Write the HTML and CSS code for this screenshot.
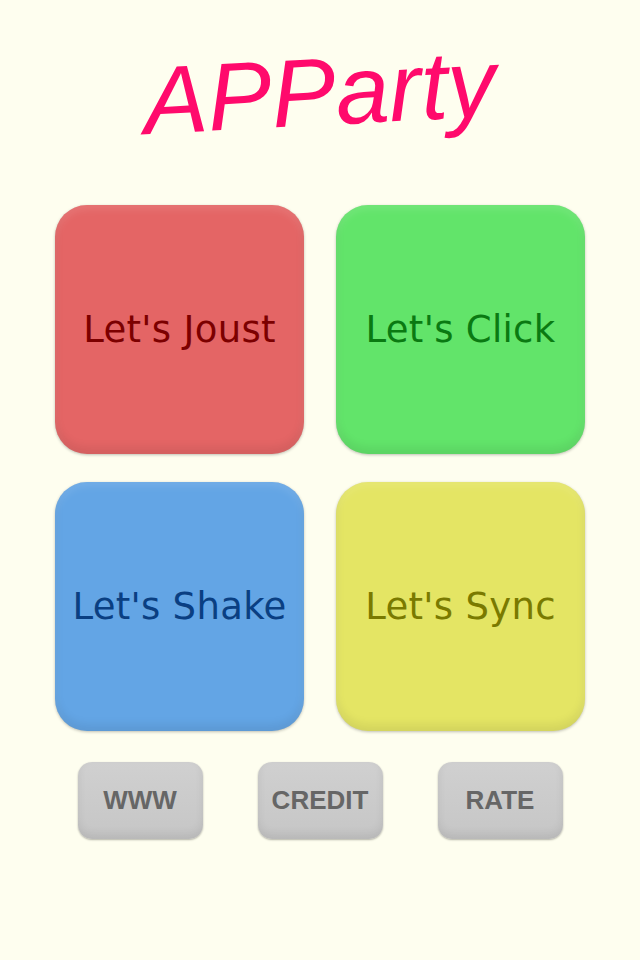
FILE: index.html
```html
<!DOCTYPE html>
<html lang="en">
<head>
    <meta charset="UTF-8">
    <meta name="viewport" content="width=device-width, initial-scale=1.0">
    <title>APParty</title>
    <link rel="stylesheet" href="styles.css">
</head>
<body>
    <h1 class="logo">APParty</h1>

    <!-- Game tiles -->
    <div class="games">
        <a class="tile joust" href="#">Let's Joust</a>
        <a class="tile click" href="#">Let's Click</a>
        <a class="tile shake" href="#">Let's Shake</a>
        <a class="tile sync" href="#">Let's Sync</a>
    </div>

    <!-- Bottom buttons -->
    <div class="links">
        <a class="small-btn" href="#">WWW</a>
        <a class="small-btn" href="#">CREDIT</a>
        <a class="small-btn" href="#">RATE</a>
    </div>
</body>
</html>
```

FILE: styles.css
```css
body {
    margin: 0;
    height: 960px;
    background-color: #fefeef;
    font-family: "Liberation Sans", Arial, sans-serif;
}
.logo {
    margin: 0;
    padding-top: 42px;
    height: 205px;
    box-sizing: border-box;
    text-align: center;
    font-size: 96px;
    font-weight: normal;
    font-style: italic;
    color: #ff0a6c;
    line-height: 100px;
    transform: rotate(-3deg);
}
.games {
    display: grid;
    grid-template-columns: 249px 249px;
    column-gap: 32px;
    row-gap: 28px;
    justify-content: center;
}
.tile {
    height: 249px;
    border-radius: 32px;
    display: flex;
    align-items: center;
    justify-content: center;
    font-family: "DejaVu Sans", sans-serif;
    font-size: 37px;
    letter-spacing: 0.3px;
    text-decoration: none;
    box-shadow: 0 1px 3px rgba(0, 0, 0, 0.25), inset 0 -6px 10px rgba(0, 0, 0, 0.08), inset 0 4px 8px rgba(255, 255, 255, 0.12);
}
.joust {
    background-color: #e46565;
    color: #7c0000;
}
.click {
    background-color: #62e46a;
    color: #0a7a12;
}
.shake {
    background-color: #63a5e5;
    color: #0a3f82;
}
.sync {
    background-color: #e4e564;
    color: #7a7a00;
}
.links {
    display: flex;
    justify-content: center;
    gap: 55px;
    margin-top: 31px;
}
.small-btn {
    width: 125px;
    height: 77px;
    border-radius: 14px;
    display: flex;
    align-items: center;
    justify-content: center;
    background: linear-gradient(#d0d0d0, #c6c6c6);
    color: #666;
    font-size: 26px;
    font-weight: bold;
    text-decoration: none;
    box-shadow: 0 1px 2px rgba(0, 0, 0, 0.3), inset 0 -5px 8px rgba(0, 0, 0, 0.08);
}
```
